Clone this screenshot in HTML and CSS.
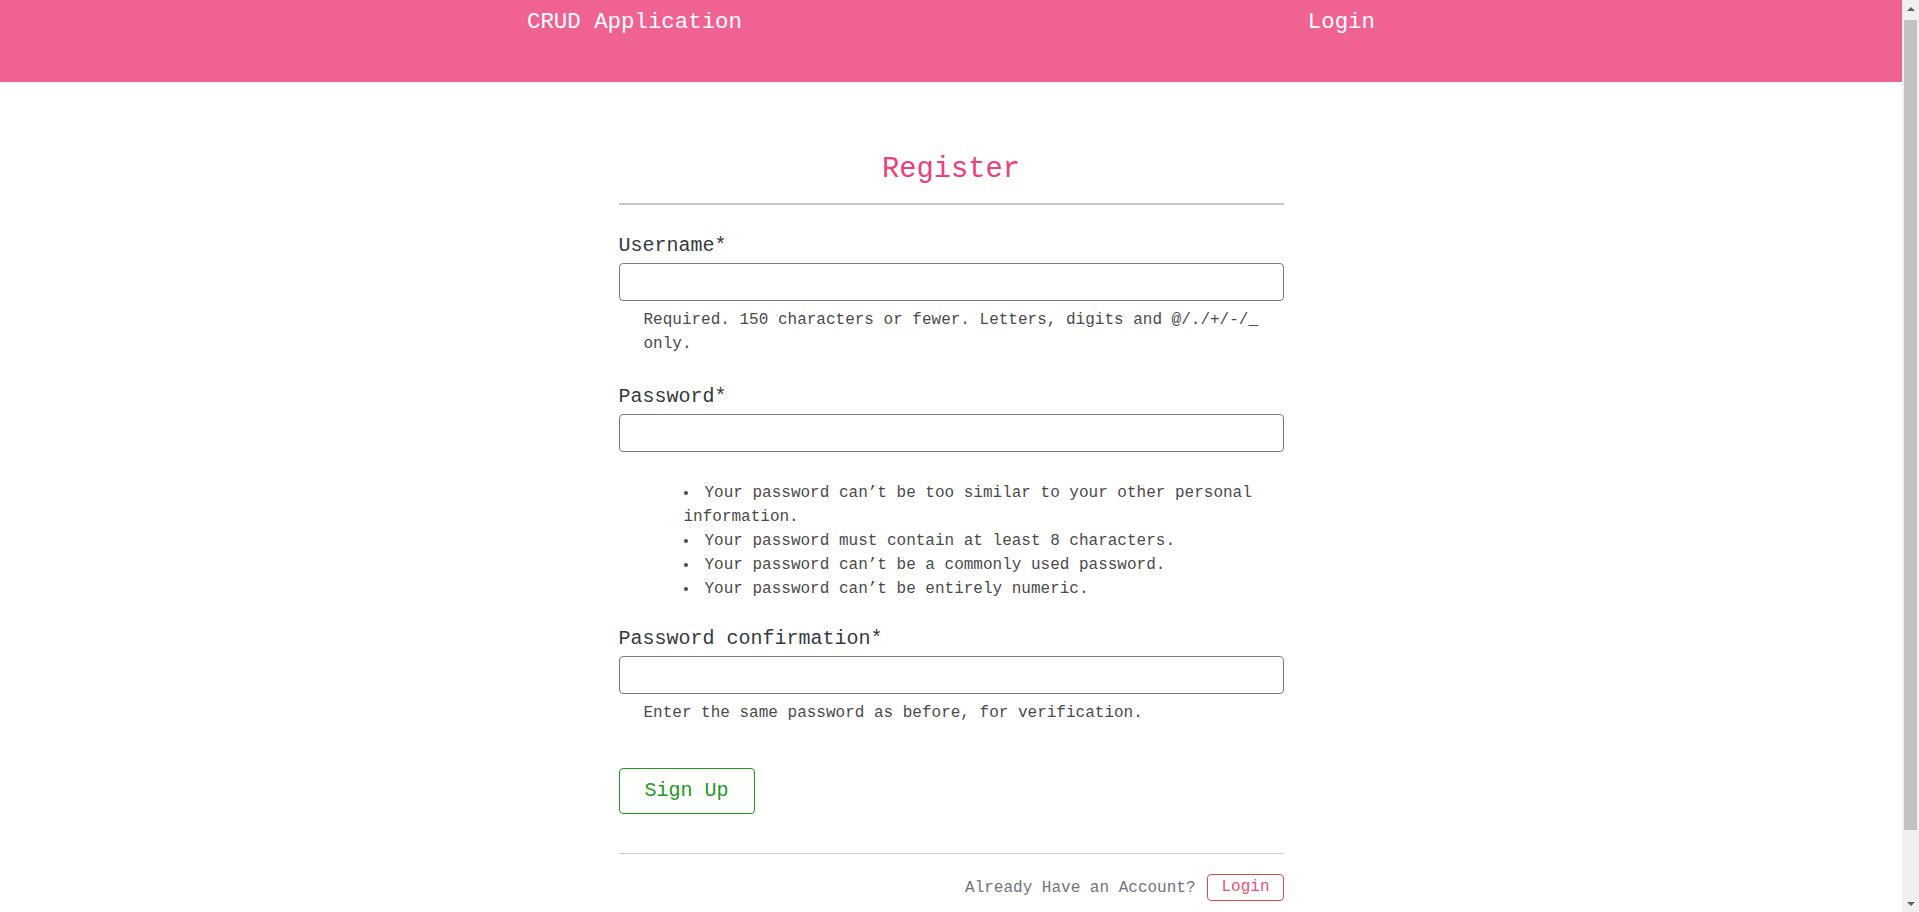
FILE: index.html
```html
<!DOCTYPE html>
<html lang="en">
<head>
<meta charset="utf-8">
<title>Register - CRUD Application</title>
<link rel="stylesheet" href="styles.css">
</head>
<body>
<div class="page">
  <header class="navbar">
    <div class="nav-inner">
      <a class="brand" href="#">CRUD Application</a>
      <a class="nav-link" href="#">Login</a>
    </div>
  </header>
  <main class="register">
    <h2 class="title">Register</h2>
    <hr class="title-rule">
    <form class="form">
      <div class="field">
        <label class="label" for="id_username">Username*</label>
        <input class="input" type="text" id="id_username">
        <div class="help">Required. 150 characters or fewer. Letters, digits and @/./+/-/_ only.</div>
      </div>
      <div class="field">
        <label class="label" for="id_password1">Password*</label>
        <input class="input" type="password" id="id_password1">
        <div class="help">
          <ul class="help-list">
            <li>Your password can’t be too similar to your other personal information.</li>
            <li>Your password must contain at least 8 characters.</li>
            <li>Your password can’t be a commonly used password.</li>
            <li>Your password can’t be entirely numeric.</li>
          </ul>
        </div>
      </div>
      <div class="field">
        <label class="label" for="id_password2">Password confirmation*</label>
        <input class="input" type="password" id="id_password2">
        <div class="help">Enter the same password as before, for verification.</div>
      </div>
      <div class="actions">
        <button class="btn-signup" type="button">Sign Up</button>
      </div>
    </form>
    <hr class="foot-rule">
    <div class="foot">
      <span class="foot-text">Already Have an Account?</span>
      <a class="btn-login" href="#">Login</a>
    </div>
  </main>
</div>
<div class="scrollbar" aria-hidden="true">
  <div class="sb-arrow sb-up"></div>
  <div class="sb-track"><div class="sb-thumb"></div></div>
  <div class="sb-arrow sb-down"></div>
</div>
</body>
</html>
```

FILE: styles.css
```css
html, body {
  margin: 0;
  padding: 0;
}

body {
  font-family: "Liberation Mono", "DejaVu Sans Mono", monospace;
  background: #ffffff;
  color: #333333;
}

.page {
  margin-right: 17px;
}

/* imitation of the classic window scrollbar drawn over the right edge */
.scrollbar {
  position: fixed;
  top: 0;
  right: 0;
  bottom: 0;
  width: 17px;
  background: #f0f0f0;
  display: flex;
  flex-direction: column;
}

.sb-arrow {
  height: 17px;
  display: flex;
  justify-content: center;
  align-items: center;
  flex: none;
}

.sb-up::before,
.sb-down::before {
  content: "";
  width: 0;
  height: 0;
  border-left: 4px solid transparent;
  border-right: 4px solid transparent;
}

.sb-up::before {
  border-bottom: 4px solid #606060;
}

.sb-down::before {
  border-top: 4px solid #606060;
}

.sb-track {
  flex: 1;
  padding: 3px 2px 0;
}

.sb-thumb {
  height: 810px;
  background: #c1c1c1;
}

.navbar {
  background: #f06292;
  height: 82px;
}

.nav-inner {
  width: 848px;
  margin: 0 auto;
  padding-top: 6px;
  display: flex;
  justify-content: space-between;
  font-size: 22.4px;
  line-height: 33.6px;
}

.brand,
.nav-link {
  color: #ffffff;
  text-decoration: none;
}

.register {
  width: 665px;
  margin: 0 auto;
  padding-bottom: 89px;
}

.title {
  margin: 71px 0 0;
  font-size: 28.8px;
  line-height: 34.56px;
  font-weight: 400;
  text-align: center;
  color: #ec407a;
}

.title-rule {
  margin: 15.5px 0 0;
  border: 0;
  border-top: 2px solid #c8c8c8;
  height: 0;
}

.form {
  margin-top: 26px;
}

.field {
  margin-bottom: 26px;
}

.label {
  display: block;
  font-size: 20px;
  line-height: 30px;
  color: #343a40;
  margin-bottom: 2px;
}

.input {
  display: block;
  width: 100%;
  box-sizing: border-box;
  height: 38px;
  margin: 0;
  padding: 6px 12px;
  border: 1px solid #7a7a7a;
  border-radius: 4px;
  font: inherit;
  font-size: 16px;
  background: #ffffff;
}

.help {
  margin-top: 7px;
  padding-left: 25px;
  font-size: 16px;
  line-height: 24px;
  color: #4a4a4a;
}

.help-list {
  margin: 29px 0 -3px;
  padding-left: 40px;
  list-style: disc inside;
}

.actions {
  margin-top: 43px;
}

.btn-signup {
  display: block;
  margin: 0;
  padding: 7px 25px;
  border: 1px solid #1e9a1e;
  border-radius: 4px;
  background: #ffffff;
  color: #1e9a1e;
  font-family: inherit;
  font-size: 20px;
  line-height: 30px;
  cursor: pointer;
}

.foot-rule {
  margin: 39px 0 0;
  border: 0;
  border-top: 1px solid #cfcfcf;
  height: 0;
}

.foot {
  margin-top: 20px;
  display: flex;
  justify-content: flex-end;
  align-items: center;
  gap: 12px;
  font-size: 16px;
  line-height: 24px;
}

.foot-text {
  color: #6c757d;
}

.btn-login {
  display: block;
  padding: 0 13px;
  line-height: 25px;
  border: 1px solid #e04a4a;
  border-radius: 4px;
  color: #ee4f73;
  text-decoration: none;
}
```
